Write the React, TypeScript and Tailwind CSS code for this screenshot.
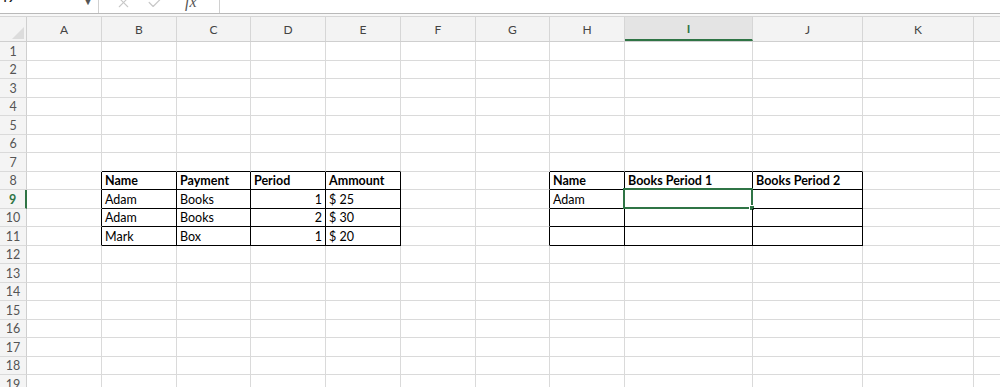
import { X, Check } from "lucide-react";

const cols = ["A", "B", "C", "D", "E", "F", "G", "H", "I", "J", "K", "L"];
const widths = [75, 75, 74, 75, 75, 75, 74, 75, 128, 110, 111, 100];

type Cell = { t: string; b?: boolean; r?: boolean };

const data: Record<string, Cell> = {
  "8-1": { t: "Name", b: true },
  "8-2": { t: "Payment", b: true },
  "8-3": { t: "Period", b: true },
  "8-4": { t: "Ammount", b: true },
  "9-1": { t: "Adam" },
  "9-2": { t: "Books" },
  "9-3": { t: "1", r: true },
  "9-4": { t: "$ 25" },
  "10-1": { t: "Adam" },
  "10-2": { t: "Books" },
  "10-3": { t: "2", r: true },
  "10-4": { t: "$ 30" },
  "11-1": { t: "Mark" },
  "11-2": { t: "Box" },
  "11-3": { t: "1", r: true },
  "11-4": { t: "$ 20" },
  "8-7": { t: "Name", b: true },
  "8-8": { t: "Books Period 1", b: true },
  "8-9": { t: "Books Period 2", b: true },
  "9-7": { t: "Adam" },
};

function inTable(r: number, c: number) {
  if (r < 8 || r > 11) return false;
  return (c >= 1 && c <= 4) || (c >= 7 && c <= 9);
}

function GridCell({ r, c }: { r: number; c: number }) {
  const d = data[`${r}-${c}`];
  const rightDark = inTable(r, c) || inTable(r, c + 1);
  const bottomDark = inTable(r, c) || inTable(r + 1, c);
  const selected = r === 9 && c === 8;
  return (
    <div
      style={{ width: widths[c] }}
      className={[
        "relative shrink-0 h-full flex items-center border-r border-b px-[3px] pt-[3px] text-[12.5px] text-black whitespace-nowrap",
        rightDark ? "border-r-black" : "border-r-[#dadada]",
        bottomDark ? "border-b-black" : "border-b-[#dadada]",
        d?.r ? "justify-end" : "justify-start",
        d?.b ? "font-bold" : "",
      ].join(" ")}
    >
      {d?.t}
      {selected && (
        <div className="absolute left-[-2px] top-[-2px] right-[-1px] bottom-[-1px] border-2 border-[#2f7445]">
          <div className="absolute right-[-4px] bottom-[-4px] w-[6px] h-[6px] bg-[#2f7445] border border-white" />
        </div>
      )}
    </div>
  );
}

export default function App() {
  const rows = Array.from({ length: 19 }, (_, i) => i + 1);
  return (
    <div className="w-[1000px] h-[387px] overflow-hidden bg-white font-['Lato',sans-serif]">
      {/* formula bar, cut off at the top */}
      <div className="h-[14px] overflow-hidden flex items-end border-b border-[#b9b9b9]">
        <div className="w-[99px] h-[24px] flex items-center justify-between pl-[3px] pr-[5px] border-r border-[#d0d0d0] mb-[-2px]">
          <span className="text-[15px] text-[#222] -mt-[14px]">I9</span>
          <span className="text-[10px] text-[#555] -mt-[4px]">▼</span>
        </div>
        <div className="flex items-center gap-[14px] pl-[16px] h-full">
          <X size={17} strokeWidth={1.5} className="text-[#c8c8c8] -mt-[8px]" />
          <Check size={19} strokeWidth={1.5} className="text-[#c8c8c8] -mt-[8px]" />
        </div>
        <div className="w-[55px] h-full flex items-start pl-[20px] border-r border-[#d0d0d0]">
          <span className="font-['Liberation_Serif',serif] italic text-[16px] text-[#555] -mt-[10px]">fx</span>
        </div>
      </div>
      <div className="h-[3px] border-b border-[#d6d6d6] bg-[#f7f7f7]" />

      {/* column headers */}
      <div className="flex h-[25px] bg-[#f3f3f3] border-b border-[#cfcfcf]">
        <div className="w-[27px] shrink-0 h-full border-r border-[#cfcfcf] relative">
          <div className="absolute right-[2px] bottom-[2px] w-0 h-0 border-l-[12px] border-l-transparent border-b-[12px] border-b-[#dcdcdc]" />
        </div>
        {cols.map((c, i) => (
          <div
            key={c}
            style={{ width: widths[i] }}
            className={
              i === 8
                ? "shrink-0 h-full flex items-center justify-center pt-[2px] border-r border-[#d6d6d6] bg-[#e4e4e4] border-b-2 border-b-[#2f7445] text-[12px] font-bold text-[#2f7445]"
                : "shrink-0 h-full flex items-center justify-center pt-[2px] border-r border-[#d6d6d6] text-[12px] text-[#444]"
            }
          >
            {c}
          </div>
        ))}
      </div>

      {/* rows */}
      {rows.map((r) => (
        <div key={r} className="flex h-[18.5px]">
          <div
            className={
              r === 9
                ? "w-[27px] shrink-0 h-full flex items-center justify-center pt-[3px] bg-[#f4f4f4] border-r-2 border-r-[#2f7445] border-b border-b-[#dadada] text-[12.5px] font-bold text-[#2f7445]"
                : "w-[27px] shrink-0 h-full flex items-center justify-center pt-[3px] bg-[#f4f4f4] border-r border-r-[#cfcfcf] border-b border-b-[#dadada] text-[12.5px] text-[#555]"
            }
          >
            {r}
          </div>
          {cols.map((_, c) => (
            <GridCell key={c} r={r} c={c} />
          ))}
        </div>
      ))}
    </div>
  );
}
